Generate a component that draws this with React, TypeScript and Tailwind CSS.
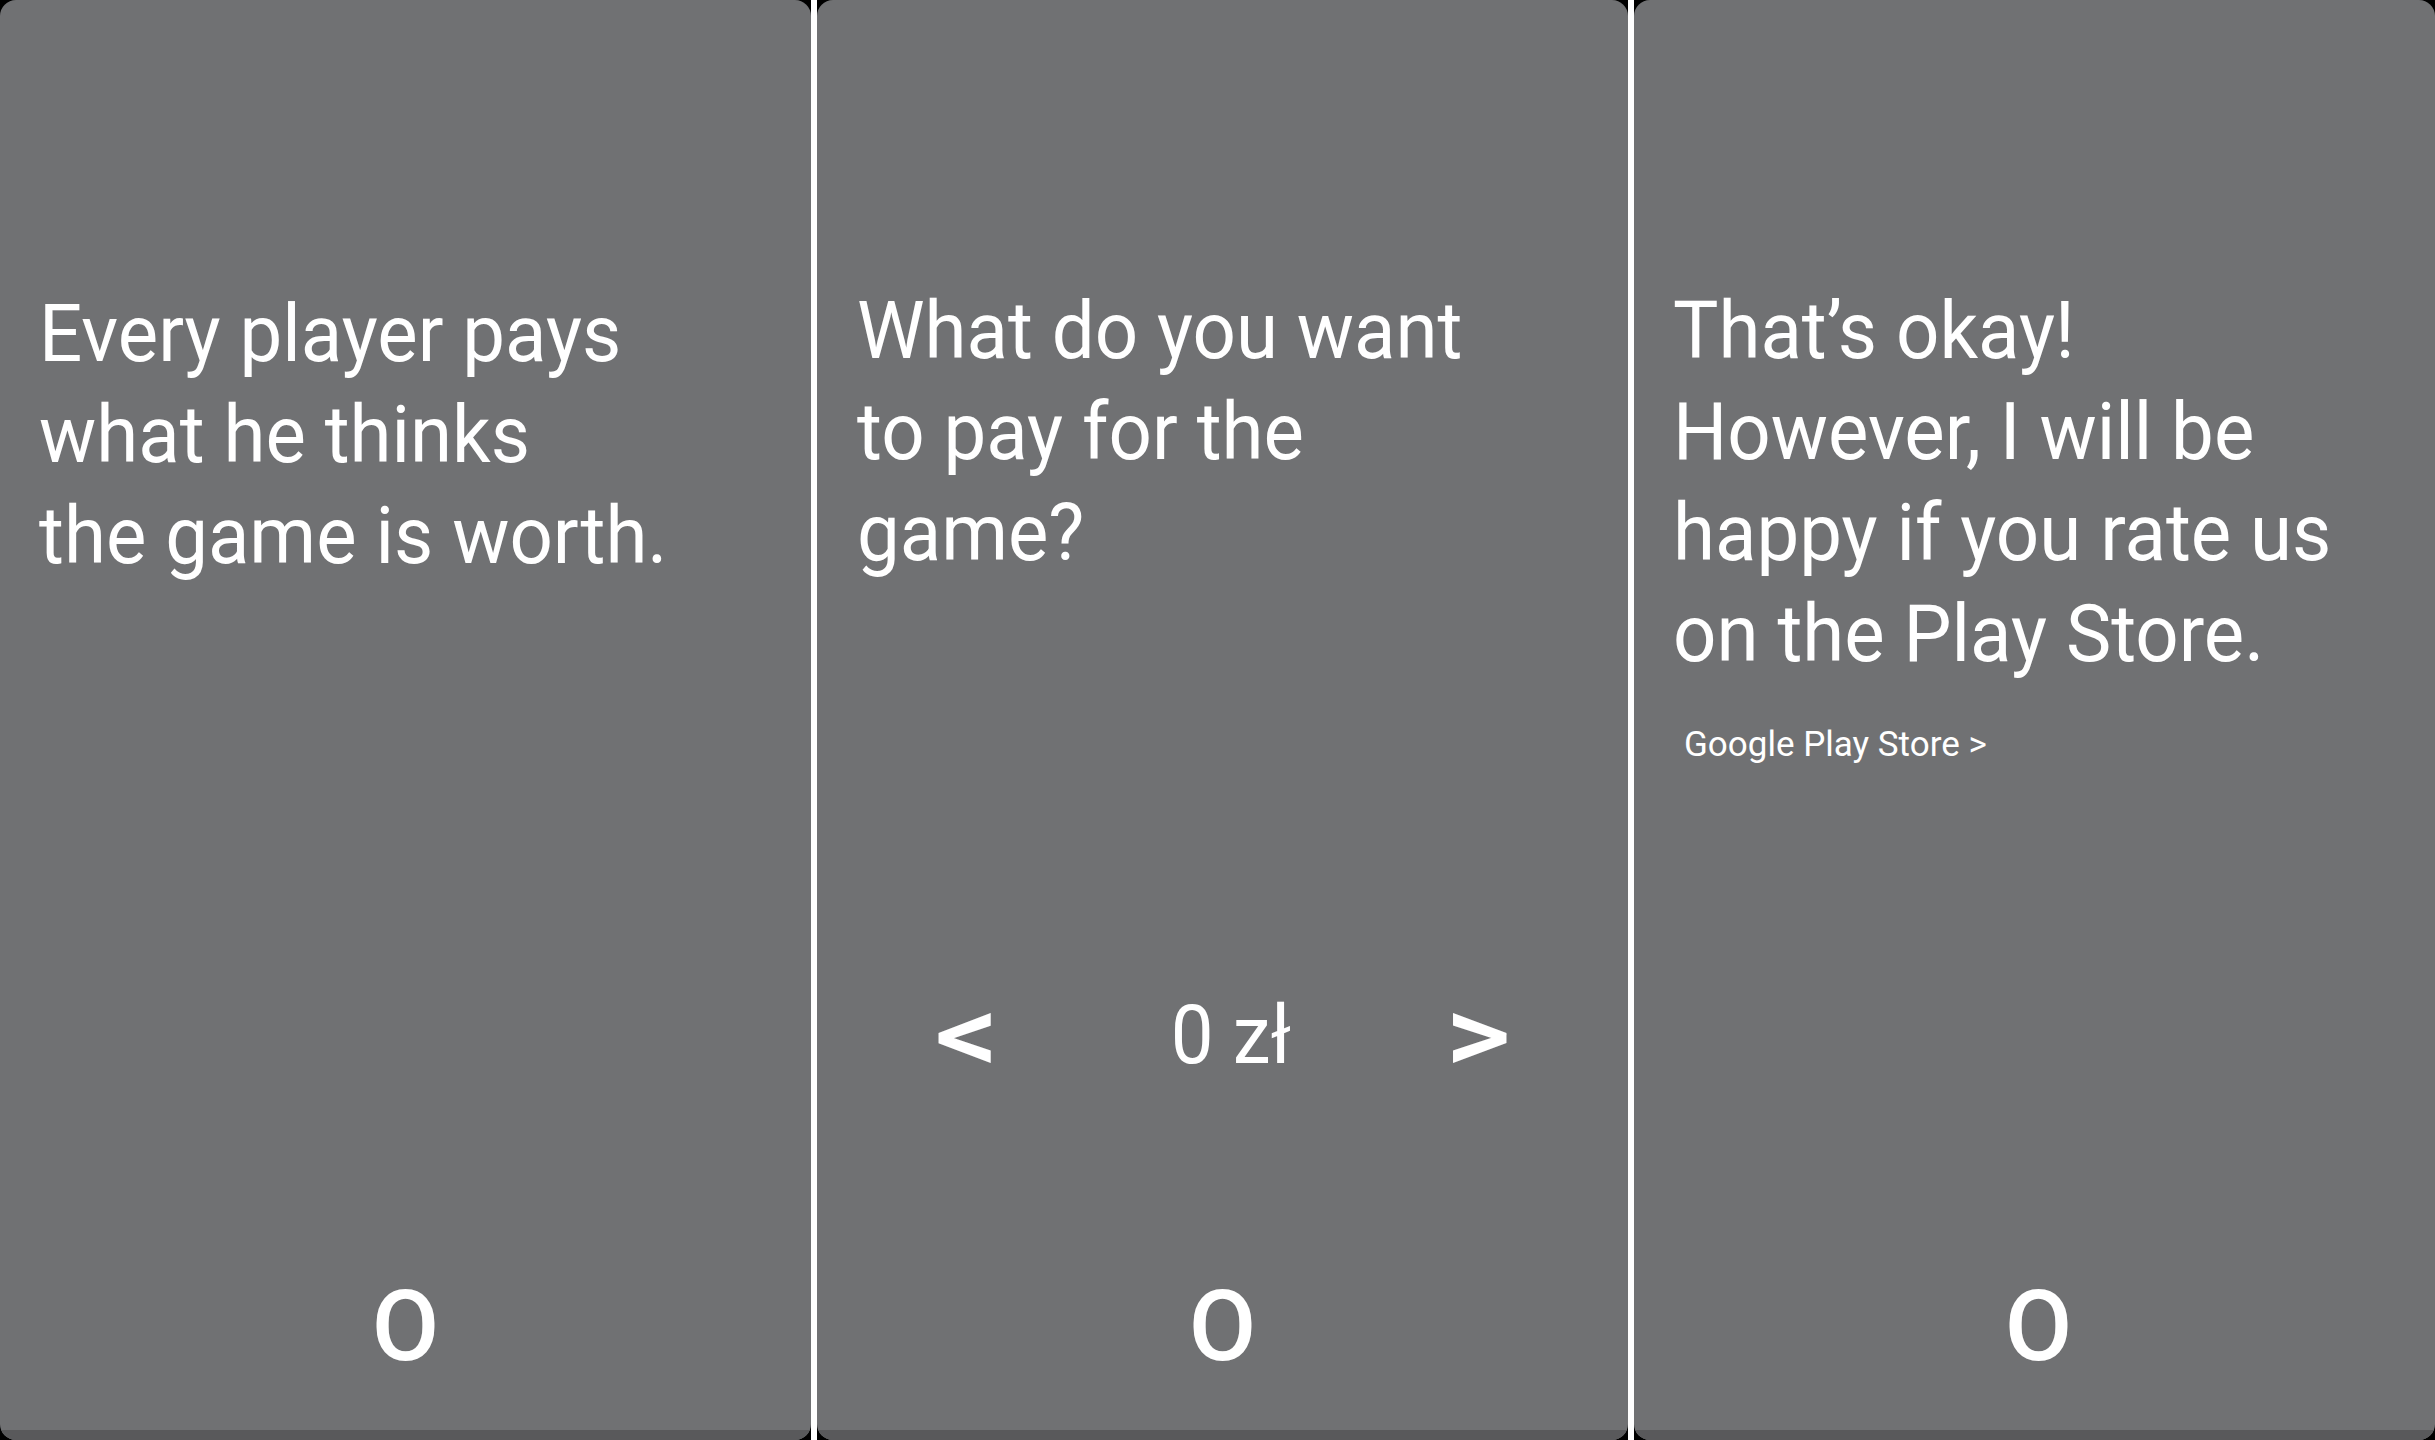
import React from "react";

const font = { fontFamily: "Roboto, 'Noto Sans', sans-serif" };

function Panel({ children, markOffset = "" }: { children: React.ReactNode; markOffset?: string }) {
  return (
    <div className="relative flex h-full flex-col overflow-hidden rounded-[16px] bg-[#707173]">
      <div className="flex flex-1 flex-col">{children}</div>
      <div className={`flex h-[143px] items-start justify-center ${markOffset}`}>
        <span className="text-[98px] font-medium leading-[80px] text-white">O</span>
      </div>
      <div className="h-[10px] bg-[#59595b]" />
    </div>
  );
}

function Divider() {
  return <div className="h-full w-[6px] shrink-0 bg-white" />;
}

export default function App() {
  return (
    <div className="flex h-[1440px] w-[2435px] bg-black text-white" style={font}>
      <div className="w-[811px] shrink-0">
        <Panel>
          <p className="origin-left scale-x-[0.952] whitespace-nowrap px-[41px] pt-[284px] text-[80px] leading-[101px]">
            Every player pays
            <br />
            what he thinks
            <br />
            the game is worth.
          </p>
        </Panel>
      </div>
      <Divider />
      <div className="w-[811px] shrink-0">
        <Panel>
          <p className="origin-left scale-x-[0.952] whitespace-nowrap px-[42px] pt-[281px] text-[80px] leading-[101px]">
            What do you want
            <br />
            to pay for the
            <br />
            game?
          </p>
          <div className="mb-[197px] mt-auto flex items-center pl-[100px]">
            <span className="w-[100px] scale-x-[1.15] text-center text-[110px] font-medium leading-none">&lt;</span>
            <span className="ml-[114px] w-[200px] scale-x-[0.93] text-center text-[82px] leading-none">0 zł</span>
            <span className="ml-[97px] w-[100px] scale-x-[1.15] text-center text-[110px] font-medium leading-none">&gt;</span>
          </div>
        </Panel>
      </div>
      <Divider />
      <div className="flex-1">
        <Panel markOffset="pl-[8px]">
          <p className="origin-left scale-x-[0.952] whitespace-nowrap px-[41px] pt-[281px] text-[80px] leading-[101px]">
            That’s okay!
            <br />
            However, I will be
            <br />
            happy if you rate us
            <br />
            on the Play Store.
          </p>
          <p className="mt-[40px] px-[50px] text-[35px] leading-[40px]">Google Play Store &gt;</p>
        </Panel>
      </div>
    </div>
  );
}
